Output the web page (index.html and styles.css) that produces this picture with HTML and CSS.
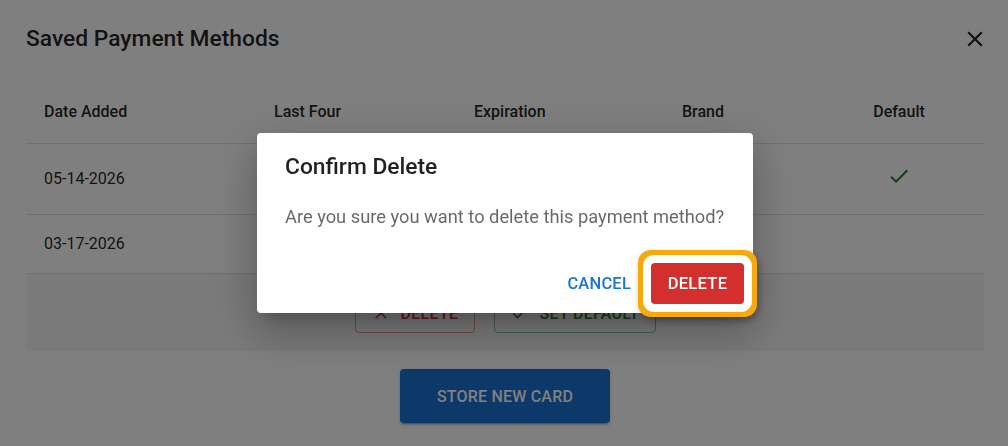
FILE: index.html
```html
<!DOCTYPE html>
<html lang="en">
<head>
<meta charset="utf-8">
<title>Saved Payment Methods</title>
<link rel="stylesheet" href="styles.css">
</head>
<body>
<div class="page">
  <header class="page-head">
    <h1 class="page-title">Saved Payment Methods</h1>
    <button class="icon-btn" aria-label="Close">
      <svg viewBox="0 0 24 24" width="26" height="26"><path d="M19 6.41 17.59 5 12 10.59 6.41 5 5 6.41 10.59 12 5 17.59 6.41 19 12 13.41 17.59 19 19 17.59 13.41 12z"/></svg>
    </button>
  </header>

  <div class="table">
    <div class="row head">
      <div class="cell">Date Added</div>
      <div class="cell">Last Four</div>
      <div class="cell">Expiration</div>
      <div class="cell">Brand</div>
      <div class="cell center">Default</div>
    </div>
    <div class="row tall">
      <div class="cell">05-14-2026</div>
      <div class="cell"></div>
      <div class="cell"></div>
      <div class="cell"></div>
      <div class="cell center">
        <svg class="check" viewBox="0 0 24 24" width="24" height="24"><path d="M9 16.17 4.83 12l-1.42 1.41L9 19 21 7l-1.41-1.41z"/></svg>
      </div>
    </div>
    <div class="row">
      <div class="cell">03-17-2026</div>
      <div class="cell"></div>
      <div class="cell"></div>
      <div class="cell"></div>
      <div class="cell center"></div>
    </div>
    <div class="actions-row">
      <button class="outline-btn danger">
        <svg viewBox="0 0 24 24" width="20" height="20"><path d="M19 6.41 17.59 5 12 10.59 6.41 5 5 6.41 10.59 12 5 17.59 6.41 19 12 13.41 17.59 19 19 17.59 13.41 12z"/></svg>
        DELETE
      </button>
      <button class="outline-btn success">
        <svg viewBox="0 0 24 24" width="20" height="20"><path d="M9 16.17 4.83 12l-1.42 1.41L9 19 21 7l-1.41-1.41z"/></svg>
        SET DEFAULT
      </button>
    </div>
  </div>

  <div class="store-wrap">
    <button class="store-btn">STORE NEW CARD</button>
  </div>
</div>

<div class="backdrop">
  <div class="dialog" role="dialog" aria-labelledby="dlg-title">
    <h2 class="dialog-title" id="dlg-title">Confirm Delete</h2>
    <p class="dialog-text">Are you sure you want to delete this payment method?</p>
    <div class="dialog-actions">
      <button class="text-btn">CANCEL</button>
      <button class="danger-btn focused">DELETE</button>
    </div>
  </div>
</div>
</body>
</html>
```

FILE: styles.css
```css
* { box-sizing: border-box; }

html, body {
  margin: 0;
  padding: 0;
  height: 100%;
}

body {
  font-family: Roboto, "Liberation Sans", Arial, sans-serif;
  color: rgba(0, 0, 0, 0.87);
  background: #fff;
  overflow: hidden;
}

button {
  font-family: inherit;
  cursor: pointer;
}

.page {
  padding: 0 24px 0 26px;
}

.page-head {
  display: flex;
  align-items: center;
  justify-content: space-between;
  height: 80px;
  padding-bottom: 2px;
}

.page-title {
  margin: 0;
  font-size: 22.8px;
  font-weight: 500;
  letter-spacing: 0;
  line-height: 30px;
}

.icon-btn {
  border: 0;
  background: none;
  padding: 0;
  margin-right: -4px;
  display: flex;
  fill: rgba(0, 0, 0, 0.87);
}

.table {
  width: 958px;
}

.row {
  display: grid;
  grid-template-columns: 230px 200px 208px 150px 170px;
  align-items: center;
  height: 59px;
  padding-bottom: 1px;
  border-bottom: 1px solid #e0e0e0;
  font-size: 16px;
}

.row.head {
  height: 64px;
  font-weight: 500;
  padding-bottom: 1px;
}

.row.tall {
  height: 71px;
  padding-bottom: 2px;
}

.cell {
  padding-left: 18px;
  display: flex;
  align-items: center;
}

.cell.center {
  padding-left: 0;
  justify-content: center;
}

.check {
  fill: #2e7d32;
  margin-top: -5px;
}

.actions-row {
  height: 77px;
  background: #f5f5f5;
  display: flex;
  justify-content: center;
  align-items: center;
  gap: 19px;
  padding-top: 1px;
}

.outline-btn {
  height: 40px;
  display: flex;
  align-items: center;
  justify-content: center;
  gap: 10px;
  background: transparent;
  border-radius: 4px;
  font-size: 16px;
  font-weight: 500;
  letter-spacing: 0.3px;
}

.outline-btn.danger {
  width: 120px;
  border: 1px solid rgba(211, 47, 47, 0.5);
  color: #d32f2f;
  fill: #d32f2f;
}

.outline-btn.success {
  width: 162px;
  border: 1px solid rgba(46, 125, 50, 0.5);
  color: #2e7d32;
  fill: #2e7d32;
}

.store-wrap {
  width: 958px;
  display: flex;
  justify-content: center;
  padding-top: 18px;
}

.store-btn {
  width: 210px;
  height: 54px;
  border: 0;
  border-radius: 4px;
  background: #1873d3;
  color: #fff;
  font-size: 16px;
  font-weight: 500;
  letter-spacing: 0.2px;
  box-shadow: 0 3px 1px -2px rgba(0,0,0,.2), 0 2px 2px 0 rgba(0,0,0,.14), 0 1px 5px 0 rgba(0,0,0,.12);
}

/* modal */
.backdrop {
  position: fixed;
  inset: 0;
  background: rgba(0, 0, 0, 0.5);
  display: flex;
  align-items: center;
  justify-content: center;
  padding-left: 2px;
}

.dialog {
  width: 496px;
  height: 180px;
  background: #fff;
  border-radius: 4px;
  padding: 19px 9px 8px 28px;
  display: flex;
  flex-direction: column;
  box-shadow: 0 11px 15px -7px rgba(0,0,0,.2), 0 24px 38px 3px rgba(0,0,0,.14), 0 9px 46px 8px rgba(0,0,0,.12);
}

.dialog-title {
  margin: 0;
  font-size: 22.8px;
  font-weight: 500;
  line-height: 30px;
  color: rgba(0, 0, 0, 0.87);
}

.dialog-text {
  margin: 23px 0 0;
  font-size: 18.3px;
  line-height: 24px;
  color: rgba(0, 0, 0, 0.6);
  white-space: nowrap;
}

.dialog-actions {
  margin-top: auto;
  padding-bottom: 1px;
  display: flex;
  justify-content: flex-end;
  align-items: center;
  gap: 20px;
}

.text-btn {
  border: 0;
  background: none;
  padding: 0;
  color: #1976d2;
  font-size: 16.5px;
  font-weight: 500;
  letter-spacing: 0.2px;
}

.danger-btn {
  width: 93px;
  height: 41px;
  border: 0;
  border-radius: 4px;
  background: #d32f2f;
  color: #fff;
  font-size: 16.5px;
  font-weight: 500;
  letter-spacing: 0.3px;
}

.danger-btn.focused {
  box-shadow: 0 0 0 8px #fff, 0 0 0 13px #f6a90a, 2px 4px 8px 12px rgba(0, 0, 0, 0.35);
  border-radius: 4px;
}
```
